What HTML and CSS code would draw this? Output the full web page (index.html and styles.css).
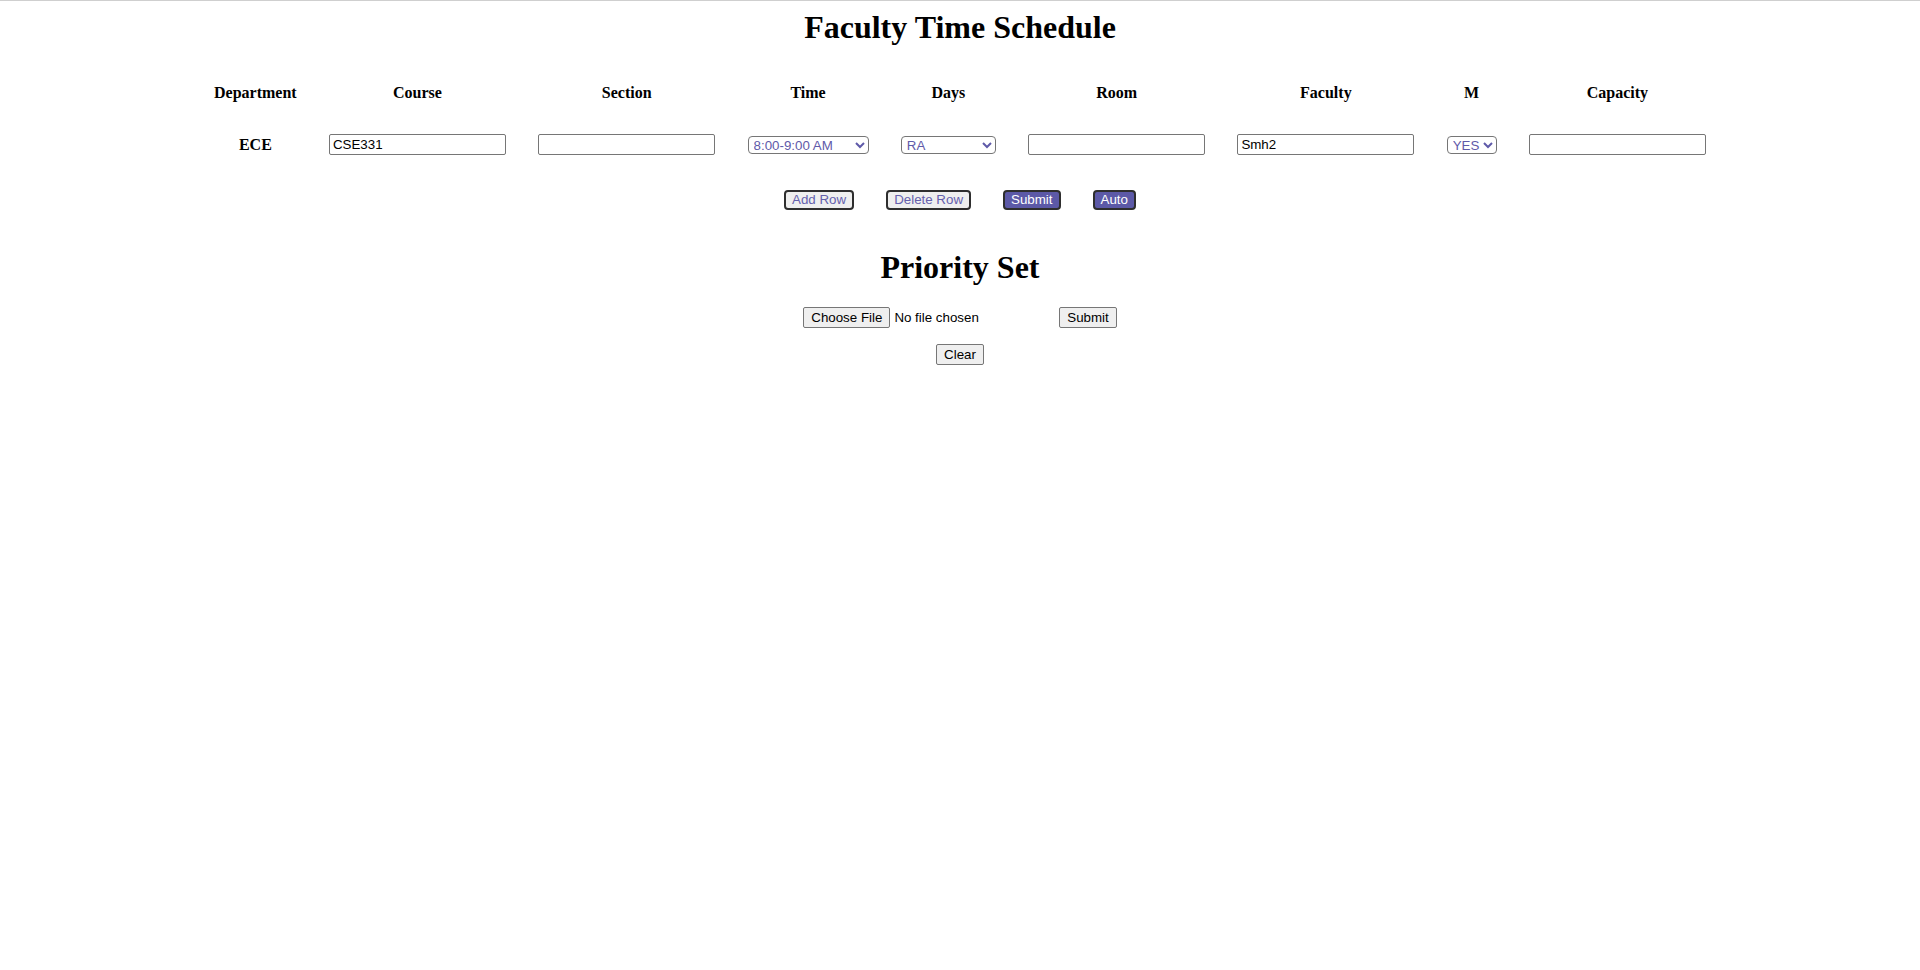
FILE: index.html
```html
<!DOCTYPE html>
<html lang="en">
<head>
<meta charset="utf-8">
<title>Faculty Time Schedule</title>
<link rel="stylesheet" href="styles.css">
</head>
<body>
<div class="page">
  <h1 class="title">Faculty Time Schedule</h1>
  <table class="schedule">
    <thead>
      <tr>
        <th>Department</th>
        <th>Course</th>
        <th>Section</th>
        <th>Time</th>
        <th>Days</th>
        <th>Room</th>
        <th>Faculty</th>
        <th>M</th>
        <th>Capacity</th>
      </tr>
    </thead>
    <tbody>
      <tr>
        <td class="dept">ECE</td>
        <td><input class="field" type="text" value="CSE331"></td>
        <td><input class="field" type="text" value=""></td>
        <td>
          <select class="pick pick-time">
            <option>8:00-9:00 AM</option>
            <option>9:00-10:00 AM</option>
            <option>10:00-11:00 AM</option>
          </select>
        </td>
        <td>
          <select class="pick pick-days">
            <option>RA</option>
            <option>ST</option>
            <option>MW</option>
          </select>
        </td>
        <td><input class="field" type="text" value=""></td>
        <td><input class="field" type="text" value="Smh2"></td>
        <td>
          <select class="pick pick-m">
            <option>YES</option>
            <option>NO</option>
          </select>
        </td>
        <td><input class="field" type="text" value=""></td>
      </tr>
    </tbody>
  </table>
  <div class="actions">
    <button class="btn btn-light" type="button">Add Row</button>
    <button class="btn btn-light" type="button">Delete Row</button>
    <button class="btn btn-dark" type="button">Submit</button>
    <button class="btn btn-dark" type="button">Auto</button>
  </div>
  <h1 class="title title-priority">Priority Set</h1>
  <div class="upload">
    <div class="file-widget">
      <label class="plain-btn">Choose File<input class="file-hidden" type="file"></label>
      <span class="file-name">No file chosen</span>
    </div>
    <button class="plain-btn" type="button">Submit</button>
  </div>
  <div class="clear-row">
    <button class="plain-btn" type="button">Clear</button>
  </div>
</div>
</body>
</html>
```
FILE: styles.css
```css
html, body {
  margin: 0;
  padding: 0;
  background: #ffffff;
}

body {
  border-top: 1px solid #cfcfcf;
  font-family: "Liberation Serif", "Times New Roman", serif;
  color: #000;
}

.page {
  padding-top: 8px;
}

.title {
  font-family: "Liberation Serif", "Times New Roman", serif;
  font-size: 32px;
  font-weight: bold;
  line-height: 37px;
  text-align: center;
  margin: 0 0 22px;
}

.title-priority {
  margin-top: 39px;
  margin-bottom: 21px;
}

.schedule {
  margin: 0 auto;
  border-collapse: collapse;
}

.schedule th,
.schedule td {
  padding: 16px 16.15px;
  text-align: center;
  vertical-align: middle;
}

.schedule th {
  font-size: 16px;
  line-height: 18px;
  font-weight: bold;
}

.dept {
  font-size: 16px;
  line-height: 18px;
  font-weight: bold;
}

.field {
  display: block;
  box-sizing: border-box;
  width: 177px;
  height: 21px;
  margin: 0 auto;
  padding: 1px 3px;
  border: 1px solid #767676;
  border-radius: 2px;
  font-family: "Liberation Sans", Arial, sans-serif;
  font-size: 13.33px;
  color: #000;
  background: #fff;
}

.pick {
  display: block;
  box-sizing: border-box;
  height: 18px;
  margin: 0 auto;
  padding: 0 0 0 1px;
  border: 1px solid #767676;
  border-radius: 4px;
  background-color: #fff;
  color: #5f5aa9;
  font-family: "Liberation Sans", Arial, sans-serif;
  font-size: 13.33px;
}

.pick-time { width: 121px; }
.pick-days { width: 95px; }
.pick-m { width: 50px; }

.actions {
  display: flex;
  justify-content: center;
  gap: 32px;
  margin-top: 19px;
}

.btn {
  box-sizing: border-box;
  height: 20px;
  padding: 0 6px;
  border: 2px solid #2e2e2e;
  border-radius: 4px;
  font-family: "Liberation Sans", Arial, sans-serif;
  font-size: 13.33px;
  line-height: 16px;
  cursor: pointer;
}

.btn-light {
  background: #efefef;
  color: #6561ad;
}

.btn-dark {
  background: #5c59a7;
  color: #ffffff;
}

.upload {
  display: flex;
  justify-content: center;
  align-items: center;
  gap: 4px;
}

.file-widget {
  display: flex;
  align-items: center;
  width: 252px;
  gap: 4px;
}

.file-hidden {
  display: none;
}

.file-name {
  font-family: "Liberation Sans", Arial, sans-serif;
  font-size: 13.33px;
  color: #000;
}

.plain-btn {
  display: inline-block;
  box-sizing: border-box;
  height: 21px;
  padding: 0 7px;
  border: 1px solid #767676;
  border-radius: 2px;
  background: #efefef;
  color: #000;
  font-family: "Liberation Sans", Arial, sans-serif;
  font-size: 13.33px;
  line-height: 19px;
  cursor: default;
}

.clear-row {
  display: flex;
  justify-content: center;
  margin-top: 16px;
}
```
